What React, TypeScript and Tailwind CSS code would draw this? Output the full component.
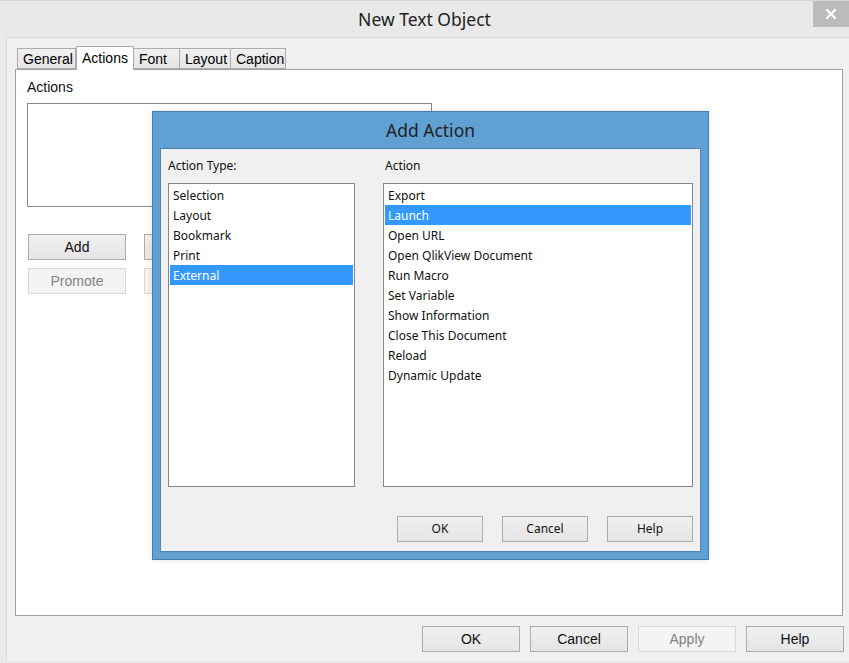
import { X } from "lucide-react";

const sysFont = "font-['Liberation_Sans',Arial,sans-serif]";
const uiFont = "font-['Noto_Sans','Open_Sans',sans-serif]";

const actionTypes = ["Selection", "Layout", "Bookmark", "Print", "External"];
const actions = [
  "Export",
  "Launch",
  "Open URL",
  "Open QlikView Document",
  "Run Macro",
  "Set Variable",
  "Show Information",
  "Close This Document",
  "Reload",
  "Dynamic Update",
];

const tabs = [
  { label: "General", w: "w-[59px]" },
  { label: "Actions", w: "w-[58px]" },
  { label: "Font", w: "w-[47px]" },
  { label: "Layout", w: "w-[52px]" },
  { label: "Caption", w: "w-[56px]" },
];

function WinButton({
  label,
  disabled,
  className = "",
}: {
  label: string;
  disabled?: boolean;
  className?: string;
}) {
  return (
    <div
      className={`flex items-center justify-center border ${
        disabled
          ? "border-[#d9d9d9] bg-[#f4f4f4] text-[#838383]"
          : "border-[#acacac] bg-gradient-to-b from-[#f0f0f0] to-[#e5e5e5] text-[#111]"
      } ${className}`}
    >
      {label}
    </div>
  );
}

function ListBox({
  items,
  selected,
  className = "",
}: {
  items: string[];
  selected: string;
  className?: string;
}) {
  return (
    <div className={`h-[304px] border border-[#828790] bg-white p-px ${className}`}>
      {items.map((item) => (
        <div
          key={item}
          className={`flex h-5 items-center pl-[3px] pt-px ${
            item === selected ? "bg-[#3399ff] text-white" : "text-[#111]"
          }`}
        >
          {item}
        </div>
      ))}
    </div>
  );
}

export default function App() {
  return (
    <div className={`relative h-[663px] w-[849px] overflow-hidden bg-[#e9e9e9] ${sysFont}`}>
      <div className="flex h-[37px] items-center justify-center border-t border-[#d4d4d4]">
        <span className={`mt-px text-[17.5px] text-[#222] ${uiFont}`}>New Text Object</span>
      </div>
      <div className="absolute right-0 top-px flex h-[26px] w-[36px] items-center justify-center bg-[#bcbcbc] text-white">
        <X className="h-4 w-4" strokeWidth={3.5} />
      </div>

      <div className="ml-[6px] h-[624px] border-l border-t border-[#d9d9d9] bg-[#f0f0f0] pl-[8px] pt-[8px] text-[14px]">
        <div className="flex h-[23px] items-end pl-[2px]">
          {tabs.map((t) =>
            t.label === "Actions" ? (
              <div
                key={t.label}
                className={`relative z-10 -mb-px flex h-[24px] ${t.w} items-start justify-center border border-b-0 border-[#acacac] bg-white pt-[1px]`}
              >
                {t.label}
              </div>
            ) : (
              <div
                key={t.label}
                className={`flex h-[21px] ${t.w} items-center border border-[#acacac] bg-gradient-to-b from-[#f0f0f0] to-[#e5e5e5] pl-[5px] pt-px -ml-px first:ml-0`}
              >
                {t.label}
              </div>
            ),
          )}
        </div>
        <div className="h-[547px] w-[828px] border border-[#a0a0a0] bg-white pl-[11px] pt-[7px]">
          <div className="text-[#111]">Actions</div>
          <div className="mt-[5px] h-[104px] w-[405px] border border-[#828790] bg-white" />
          <div className="ml-px mt-[27px] flex gap-[18px]">
            <WinButton label="Add" className="h-[26px] w-[98px]" />
            <WinButton label="" className="h-[26px] w-[98px]" />
          </div>
          <div className="ml-px mt-[8px] flex gap-[18px]">
            <WinButton label="Promote" disabled className="h-[26px] w-[98px]" />
            <WinButton label="" disabled className="h-[26px] w-[98px]" />
          </div>
        </div>
        <div className="mt-[10px] flex justify-end gap-[10px] pr-[5px]">
          <WinButton label="OK" className="h-[26px] w-[98px]" />
          <WinButton label="Cancel" className="h-[26px] w-[98px]" />
          <WinButton label="Apply" disabled className="h-[26px] w-[98px]" />
          <WinButton label="Help" className="h-[26px] w-[98px]" />
        </div>
      </div>

      {/* modal dialog */}
      <div
        className={`absolute left-[152px] top-[111px] flex h-[449px] w-[557px] flex-col border border-[#4a7cab] bg-[#61a0d2] shadow-[0_0_6px_rgba(0,0,0,0.12)] ${uiFont} text-[12px]`}
      >
        <div className="flex h-[36px] items-center justify-center text-[17.5px] text-[#222]">Add Action</div>
        <div className="mx-[7px] mb-[7px] flex-1 border border-[#4f86b6] bg-[#f0f0f0] px-[7px] pt-[8px]">
          <div className="flex gap-[28px]">
            <div className="w-[187px]">
              <div className="mb-[8px] h-[18px] leading-[18px] text-[#111]">Action Type:</div>
              <ListBox items={actionTypes} selected="External" />
            </div>
            <div className="w-[310px]">
              <div className="mb-[8px] h-[18px] pl-[2px] leading-[18px] text-[#111]">Action</div>
              <ListBox items={actions} selected="Launch" />
            </div>
          </div>
          <div className="mt-[29px] flex justify-end gap-[19px]">
            <WinButton label="OK" className="h-[26px] w-[86px]" />
            <WinButton label="Cancel" className="h-[26px] w-[86px]" />
            <WinButton label="Help" className="h-[26px] w-[86px]" />
          </div>
        </div>
      </div>
    </div>
  );
}
